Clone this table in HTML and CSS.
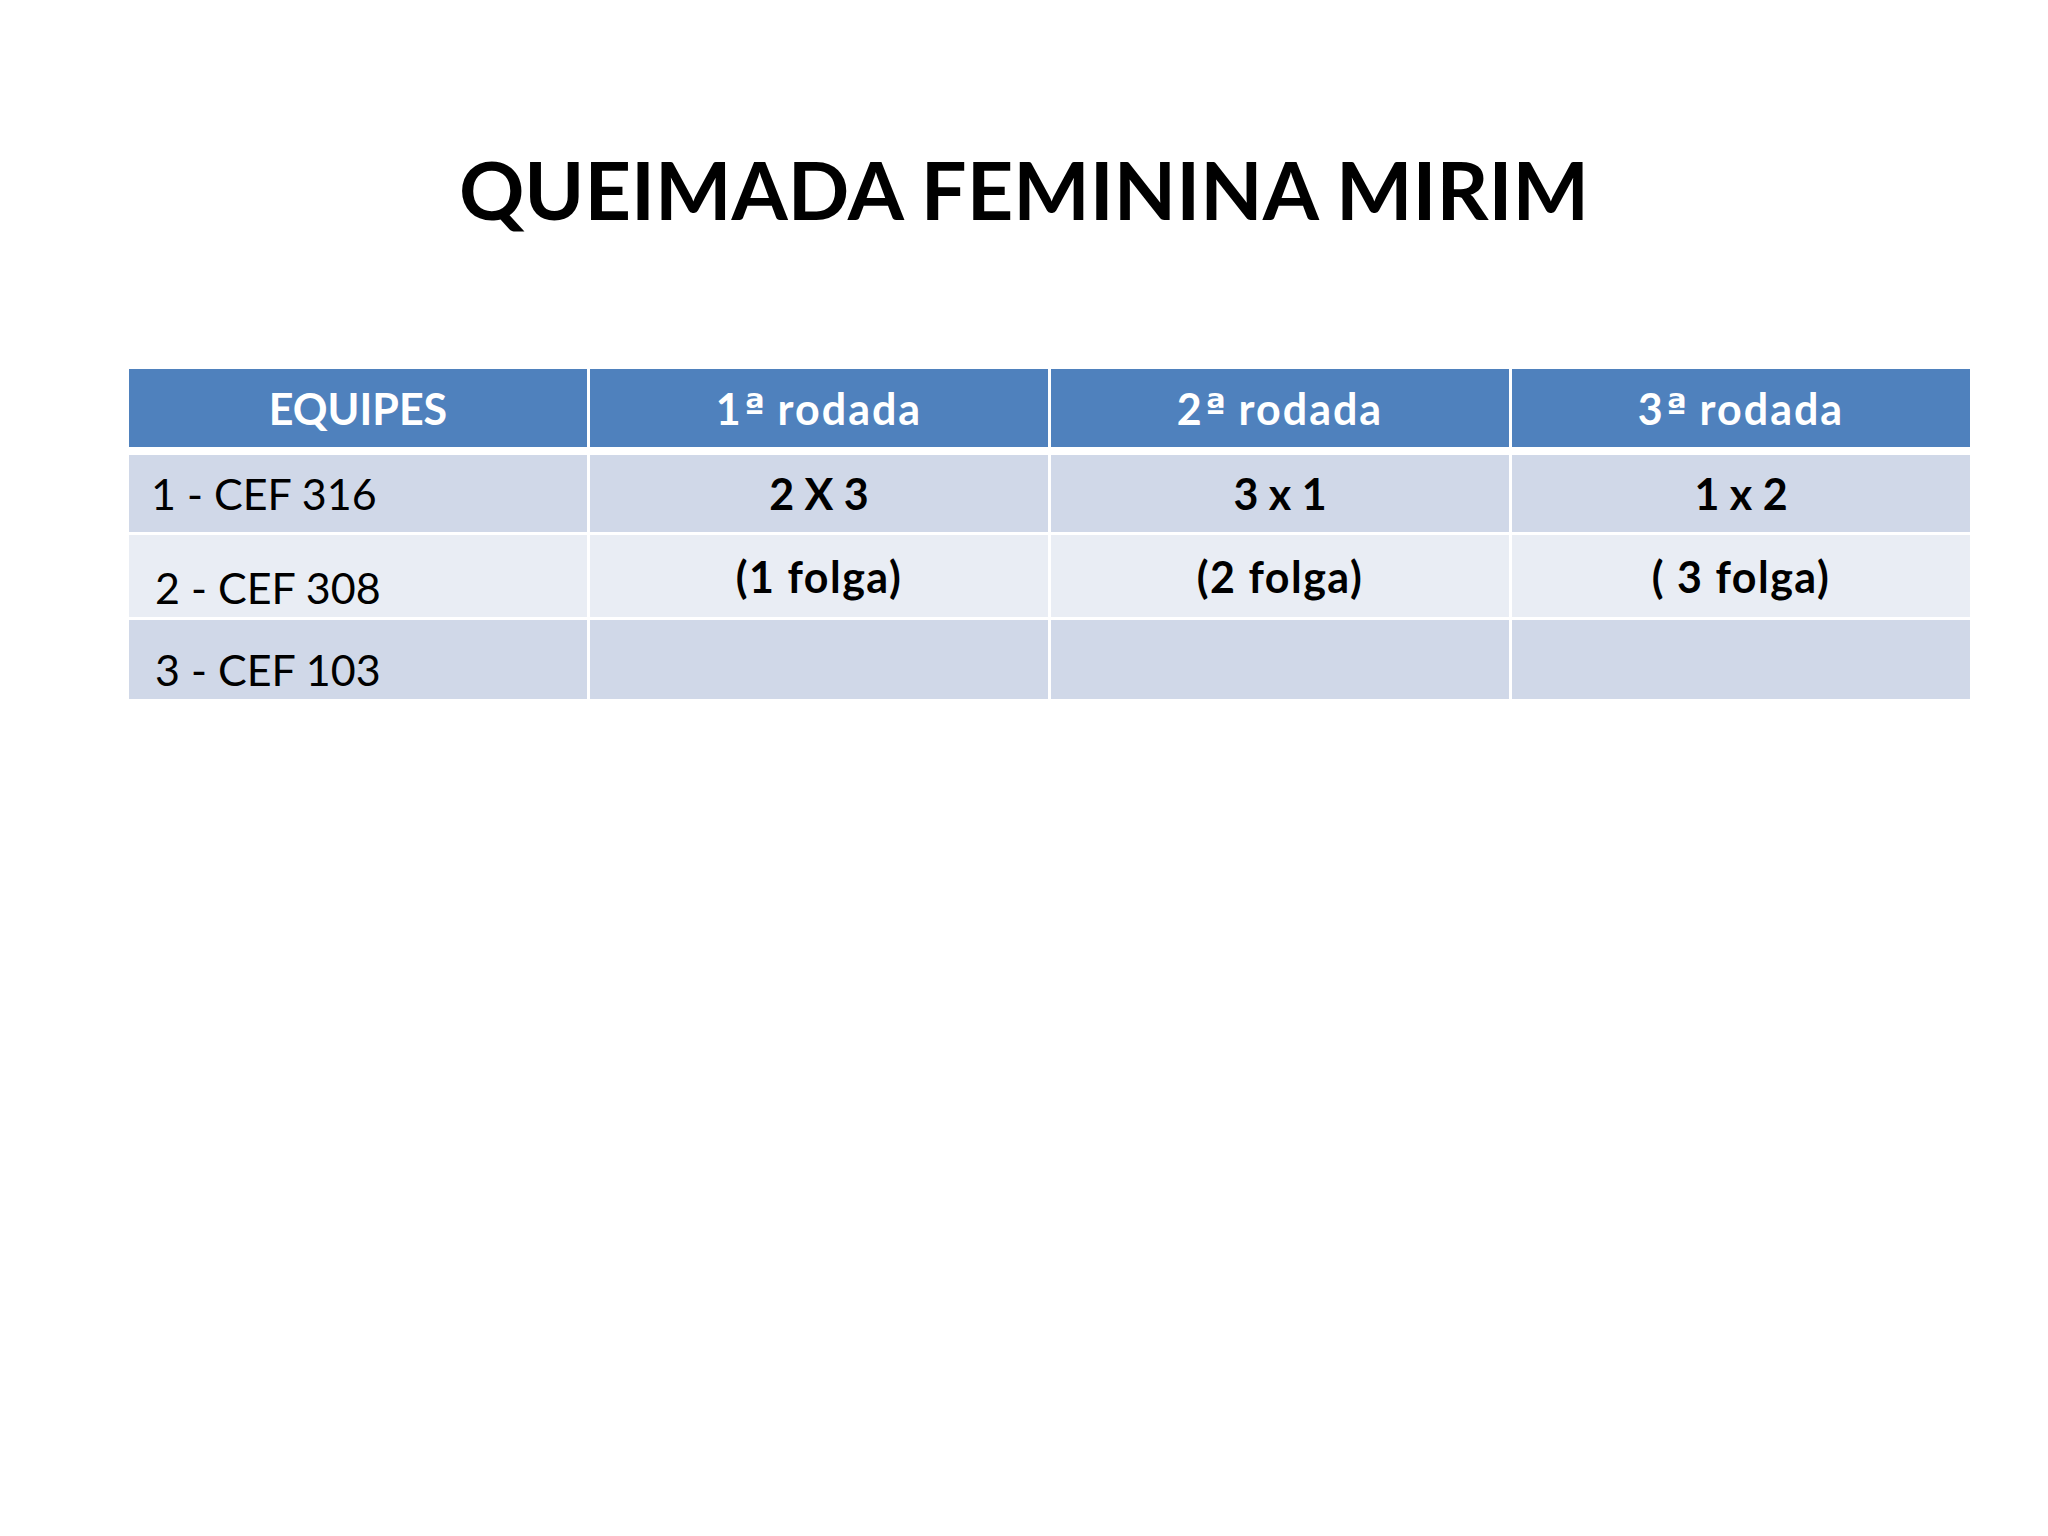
FILE: index.html
```html
<!DOCTYPE html>
<html lang="pt">
<head>
<meta charset="utf-8">
<title>Queimada Feminina Mirim</title>
<link rel="stylesheet" href="styles.css">
</head>
<body>
<main class="slide">
  <h1 class="title">QUEIMADA FEMININA MIRIM</h1>
  <div class="table">
    <div class="cell head">EQUIPES</div>
    <div class="cell head round">1<span class="ord">ª</span> rodada</div>
    <div class="cell head round">2<span class="ord">ª</span> rodada</div>
    <div class="cell head round">3<span class="ord">ª</span> rodada</div>

    <div class="cell r1 team">1 - CEF 316</div>
    <div class="cell r1 game">2 X 3</div>
    <div class="cell r1 game">3 x 1</div>
    <div class="cell r1 game">1 x 2</div>

    <div class="cell r2 team low">2 - CEF 308</div>
    <div class="cell r2 game folga">(1 folga)</div>
    <div class="cell r2 game folga">(2 folga)</div>
    <div class="cell r2 game folga">( 3 folga)</div>

    <div class="cell r3 team low3">3 - CEF 103</div>
    <div class="cell r3"></div>
    <div class="cell r3"></div>
    <div class="cell r3"></div>
  </div>
</main>
</body>
</html>
```
FILE: styles.css
```css
html, body {
  margin: 0;
  padding: 0;
  background: #ffffff;
}

.slide {
  width: 2048px;
  height: 1536px;
  box-sizing: border-box;
  padding-top: 148px;
  font-family: "Lato", "Open Sans", sans-serif;
  color: #000000;
}

.title {
  margin: 0;
  text-align: center;
  font-size: 81px;
  line-height: 81px;
  font-weight: 700;
  letter-spacing: 0;
}

.table {
  margin: 140px 0 0 129px;
  display: grid;
  grid-template-columns: repeat(4, 458px);
  column-gap: 3px;
  row-gap: 3px;
  font-size: 43px;
  line-height: 1;
}

.cell {
  display: flex;
  align-items: center;
  justify-content: center;
  box-sizing: border-box;
  white-space: pre;
}

.head {
  height: 78px;
  margin-bottom: 5px;
  background: #4f81bd;
  color: #ffffff;
  font-weight: 700;
}

.round {
  letter-spacing: 2px;
}

.ord {
  font-family: "DejaVu Sans", "Open Sans", sans-serif;
  font-weight: 700;
  font-size: 38px;
  letter-spacing: 0;
  margin-left: 1px;
}

.r1 { height: 77px; background: #d0d8e8; }
.r2 { height: 82px; background: #e9edf4; }
.r3 { height: 79px; background: #d0d8e8; }

.team {
  justify-content: flex-start;
  padding-left: 22px;
  font-weight: 400;
}

.team.low { padding-left: 26px; padding-top: 22px; }
.team.low3 { padding-left: 26px; padding-top: 20px; }

.game {
  font-weight: 700;
}

.folga {
  letter-spacing: 1.5px;
}
```
